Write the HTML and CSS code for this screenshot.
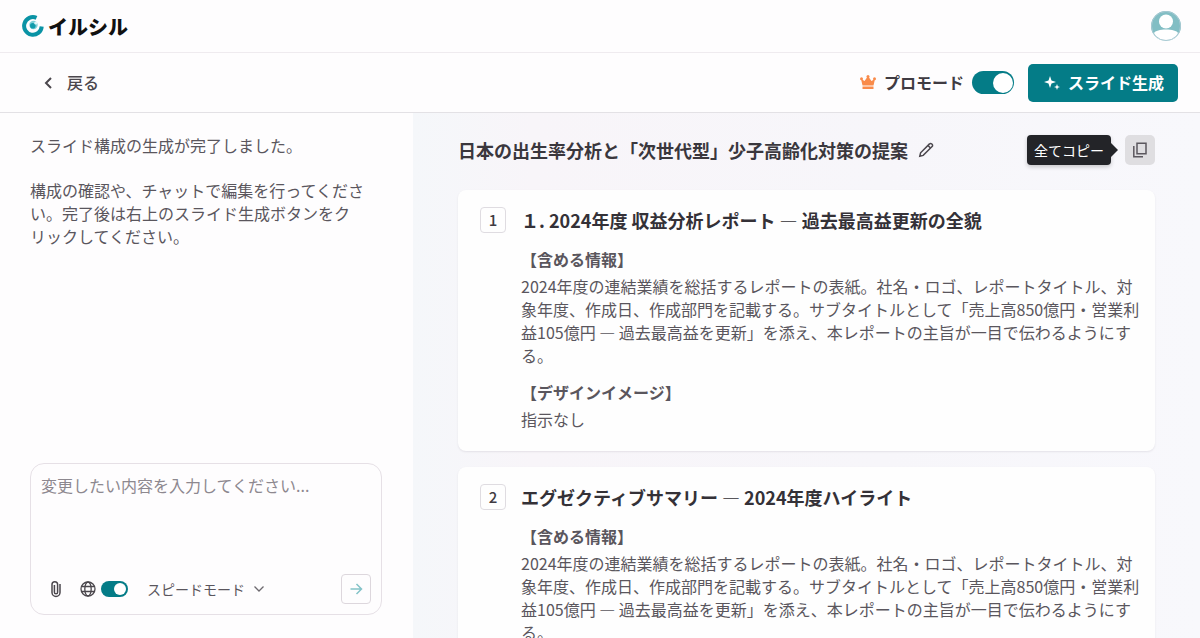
FILE: index.html
```html
<!DOCTYPE html>
<html lang="ja">
<head>
    <meta charset="UTF-8">
    <meta name="viewport" content="width=device-width, initial-scale=1.0">
    <title>イルシル</title>
    <link rel="stylesheet" href="styles.css">
</head>
<body>
    <header class="site-header">
        <a href="#" class="logo">
            <svg width="22" height="22" viewBox="0 0 22 22" fill="none">
                <path d="M14.500 2.900A8.800 8.800 0 1 0 19.700 11.500" stroke="#0a93a5" stroke-width="4"/>
                <circle cx="11.500" cy="10" r="4.200" fill="#7fd0d8"/>
                <circle cx="10.800" cy="10.800" r="2.800" fill="#129bab"/>
                <circle cx="13.800" cy="8" r="1.600" fill="#e4f6f7"/>
            </svg>
            <span>イルシル</span>
        </a>
        <button class="avatar" aria-label="アカウント">
            <svg width="32" height="32" viewBox="0 0 32 32">
                <circle cx="16" cy="16" r="15" fill="#82bec4"/>
                <circle cx="16" cy="11.500" r="7" fill="#fff"/>
                <path d="M3.500 23.500C5.500 20.500 10 19.500 16 19.500s10.500 1 12.500 4A14.400 14.400 0 0 1 3.500 23.500z" fill="#fff"/>
                <circle cx="16" cy="16" r="14.500" fill="none" stroke="#a9c9d3"/>
            </svg>
        </button>
    </header>

    <div class="toolbar">
        <a href="#" class="back">
            <svg width="10" height="12" viewBox="0 0 10 12" fill="none" stroke="#4b474d" stroke-width="2">
                <path d="M8 1L3 6l5 5"/>
            </svg>
            戻る
        </a>
        <div class="toolbar-actions">
            <label class="pro-mode">
                <svg width="16" height="15" viewBox="0 0 16 15" fill="#f98b4a">
                    <path d="M2.500 10.500L1 4l3.600 2L8 1l3.400 5L15 4l-1.500 6.500z"/>
                    <circle cx="1.500" cy="3.800" r="1.500"/>
                    <circle cx="8" cy="1.600" r="1.500"/>
                    <circle cx="14.500" cy="3.800" r="1.500"/>
                    <path d="M2.500 11.500h11v2.500h-11z"/>
                </svg>
                <span>プロモード</span>
                <input type="checkbox" class="switch" checked>
            </label>
            <button class="generate-btn">
                <svg width="16" height="16" viewBox="0 0 16 16" fill="#fff">
                    <path d="M6 1l1.500 4.500L12 7 7.500 8.500 6 13 4.500 8.500 0 7l4.500-1.500z"/>
                    <path d="M13 9l.8 2.200L16 12l-2.200.8L13 15l-.8-2.200L10 12l2.200-.8z"/>
                </svg>
                スライド生成
            </button>
        </div>
    </div>

    <main class="workspace">
        <section class="chat">
            <div class="message">
                <p>スライド構成の生成が完了しました。</p>
                <p>構成の確認や、チャットで編集を行ってください。完了後は右上のスライド生成ボタンをクリックしてください。</p>
            </div>
            <form class="composer">
                <textarea aria-label="変更内容" placeholder="変更したい内容を入力してください..."></textarea>
                <div class="composer-tools">
                    <button type="button" class="icon-btn" aria-label="ファイルを添付">
                        <svg width="12" height="18" viewBox="0 0 12 18" fill="none" stroke="#4b474d" stroke-width="1.500">
                            <path d="M10 4v8.500a4 4 0 0 1-8 0V4.500a2.800 2.800 0 0 1 5.600 0v7.700a1.600 1.600 0 0 1-3.200 0V5"/>
                        </svg>
                    </button>
                    <label class="web-search">
                        <svg width="16" height="16" viewBox="0 0 16 16" fill="none" stroke="#4b474d" stroke-width="1.300">
                            <circle cx="8" cy="8" r="7"/>
                            <ellipse cx="8" cy="8" rx="3.200" ry="7"/>
                            <path d="M1.500 5.500h13M1.500 10.500h13"/>
                        </svg>
                        <input type="checkbox" class="switch small" aria-label="Web検索" checked>
                    </label>
                    <div class="mode">
                        <select aria-label="生成モード">
                            <option>スピードモード</option>
                        </select>
                        <svg width="12" height="8" viewBox="0 0 12 8" fill="none" stroke="#6d696f" stroke-width="1.300">
                            <path d="M1.500 1.500L6 6l4.500-4.500"/>
                        </svg>
                    </div>
                    <button type="submit" class="send-btn" aria-label="送信">
                        <svg width="14" height="14" viewBox="0 0 14 14" fill="none" stroke="#84c3c8" stroke-width="1.500">
                            <path d="M1.500 7h11M7.500 2l5 5-5 5"/>
                        </svg>
                    </button>
                </div>
            </form>
        </section>

        <section class="outline">
            <div class="outline-header">
                <h1>日本の出生率分析と「次世代型」少子高齢化対策の提案</h1>
                <button class="icon-btn edit-btn" aria-label="タイトルを編集">
                    <svg width="16" height="16" viewBox="0 0 16 16" fill="none" stroke="#4b474d" stroke-width="1.500">
                        <path d="M1.800 14.200l.8-3.400L11.500 1.900a1.500 1.500 0 0 1 2.200 0l.4.400a1.500 1.500 0 0 1 0 2.200L5.200 13.400z"/>
                        <path d="M10 3.500L12.500 6"/>
                    </svg>
                </button>
                <div class="copy">
                    <span class="tooltip">全てコピー</span>
                    <button class="copy-btn" aria-label="全てコピー">
                        <svg width="16" height="16" viewBox="0 0 16 16" fill="none" stroke="#5b575e" stroke-width="1.500">
                            <path d="M5 1.200h9v10.500H5z"/>
                            <path d="M1.800 4v10.700H11"/>
                        </svg>
                    </button>
                </div>
            </div>

            <article class="slide-card">
                <span class="number">1</span>
                <div class="slide-body">
                    <h2>１. 2024年度 収益分析レポート ― 過去最高益更新の全貌</h2>
                    <h3>【含める情報】</h3>
                    <p>2024年度の連結業績を総括するレポートの表紙。社名・ロゴ、レポートタイトル、対象年度、作成日、作成部門を記載する。サブタイトルとして「売上高850億円・営業利益105億円 ― 過去最高益を更新」を添え、本レポートの主旨が一目で伝わるようにする。</p>
                    <h3>【デザインイメージ】</h3>
                    <p>指示なし</p>
                </div>
            </article>

            <article class="slide-card">
                <span class="number">2</span>
                <div class="slide-body">
                    <h2>エグゼクティブサマリー ― 2024年度ハイライト</h2>
                    <h3>【含める情報】</h3>
                    <p>2024年度の連結業績を総括するレポートの表紙。社名・ロゴ、レポートタイトル、対象年度、作成日、作成部門を記載する。サブタイトルとして「売上高850億円・営業利益105億円 ― 過去最高益を更新」を添え、本レポートの主旨が一目で伝わるようにする。</p>
                </div>
            </article>
        </section>
    </main>
</body>
</html>
```
FILE: styles.css
```css
* {
    box-sizing: border-box;
}

body {
    display: flex;
    flex-direction: column;
    height: 100vh;
    margin: 0;
    overflow: hidden;
    font-family: "Noto Sans CJK JP", sans-serif;
    font-size: 16px;
    line-height: 23px;
    color: #5a565d;
    background-color: #fefdfe;
}

button, textarea, select {
    font-family: inherit;
    font-size: inherit;
    line-height: inherit;
    color: inherit;
}

button {
    padding: 0;
    border: none;
    background: none;
    cursor: pointer;
}

a {
    color: inherit;
    text-decoration: none;
}

svg {
    display: block;
    flex-shrink: 0;
}

h1, h2, h3, p {
    margin: 0;
}

/* Header */
.site-header {
    display: flex;
    align-items: center;
    justify-content: space-between;
    height: 53px;
    flex-shrink: 0;
    padding: 0 18px 0 22px;
    border-bottom: 1px solid #efebef;
}

.logo {
    display: flex;
    align-items: center;
    gap: 4px;
    font-size: 20px;
    font-weight: 900;
    color: #111;
}

/* Toolbar */
.toolbar {
    display: flex;
    align-items: center;
    justify-content: space-between;
    height: 60px;
    flex-shrink: 0;
    padding: 0 22px 0 43px;
    border-bottom: 1px solid #e3e1e5;
}

.back {
    display: flex;
    align-items: center;
    gap: 14px;
    font-weight: 500;
    color: #4b474d;
}

.toolbar-actions {
    display: flex;
    align-items: center;
    gap: 14px;
}

.pro-mode {
    display: flex;
    align-items: center;
    gap: 8px;
    font-weight: 700;
    color: #3f3b42;
    cursor: pointer;
}

.generate-btn {
    display: flex;
    align-items: center;
    justify-content: center;
    gap: 8px;
    height: 38px;
    padding: 0 14px 0 16px;
    border-radius: 5px;
    font-weight: 700;
    color: #fff;
    background-color: #047c87;
}

.switch {
    appearance: none;
    display: flex;
    align-items: center;
    justify-content: flex-end;
    width: 42px;
    height: 23px;
    margin: 0;
    padding: 1px;
    border-radius: 12px;
    background-color: #047c87;
    cursor: pointer;
}

.switch::before {
    content: "";
    width: 20px;
    height: 20px;
    border-radius: 50%;
    background-color: #fff;
}

.switch:not(:checked) {
    justify-content: flex-start;
    background-color: #bbb;
}

.switch.small {
    width: 27px;
    height: 16px;
    padding: 2px;
}

.switch.small::before {
    width: 12px;
    height: 12px;
}

/* Chat */
.workspace {
    display: grid;
    grid-template-columns: 413px 1fr;
    flex: 1;
    min-height: 0;
}

.chat {
    display: flex;
    flex-direction: column;
    justify-content: space-between;
    min-height: 0;
    padding: 21px 31px 23px 30px;
}

.message {
    padding-right: 8px;
    line-break: strict;
}

.message p + p {
    margin-top: 22px;
}

.composer {
    display: flex;
    flex-direction: column;
    height: 152px;
    padding: 10px 10px 10px 10px;
    border: 1px solid #e6e0e6;
    border-radius: 14px;
}

.composer textarea {
    flex: 1;
    width: 100%;
    padding: 0;
    border: none;
    outline: none;
    resize: none;
    background: none;
}

.composer textarea::placeholder {
    color: #8d888f;
}

.composer-tools {
    display: flex;
    align-items: center;
    padding-left: 9px;
}

.web-search {
    display: flex;
    align-items: center;
    gap: 5px;
    margin-left: 18px;
}

.mode {
    display: flex;
    align-items: center;
    gap: 8px;
    margin-left: 19px;
    font-size: 14px;
}

.mode select {
    appearance: none;
    padding: 0;
    border: none;
    background: none;
}

.send-btn {
    display: flex;
    align-items: center;
    justify-content: center;
    width: 30px;
    height: 30px;
    margin-left: auto;
    border: 1px solid #ddd7dd;
    border-radius: 4px;
}

/* Outline */
.outline {
    min-width: 0;
    overflow: hidden;
    padding: 22px 45px 0;
    background: linear-gradient(90deg, #f5f7fa, #f8f5f9 15%, #f7f6fa 60%, #f8f8fc);
}

.outline-header {
    display: flex;
    align-items: center;
    height: 30px;
    margin-bottom: 25px;
}

.outline-header h1 {
    font-size: 18px;
    font-weight: 700;
    color: #3a373d;
}

.edit-btn {
    margin-left: 10px;
}

.copy {
    position: relative;
    margin-left: auto;
}

.copy-btn {
    display: flex;
    align-items: center;
    justify-content: center;
    width: 30px;
    height: 30px;
    border-radius: 5px;
    background-color: #dfdee1;
}

.tooltip {
    position: absolute;
    top: 0;
    right: 100%;
    margin-right: 14px;
    padding: 0 7px;
    border-radius: 4px;
    font-size: 14px;
    line-height: 30px;
    white-space: nowrap;
    color: #fff;
    background-color: #232428;
    box-shadow: 0 2px 4px rgba(0, 0, 0, 0.2);
}

.tooltip::after {
    content: "";
    position: absolute;
    top: 50%;
    left: 100%;
    margin-top: -7px;
    border: 7px solid transparent;
    border-left-color: #232428;
    border-right: none;
}

.slide-card {
    display: flex;
    gap: 15px;
    margin-bottom: 16px;
    padding: 17px 8px 20px 22px;
    border-radius: 8px;
    background-color: #fefefe;
    box-shadow: 0 1px 2px rgba(60, 50, 70, 0.1);
}

.number {
    flex-shrink: 0;
    width: 26px;
    height: 26px;
    border: 1px solid #dfdce1;
    border-radius: 4px;
    font-size: 15px;
    font-weight: 500;
    line-height: 24px;
    text-align: center;
    color: #3f3b42;
}

.slide-body {
    flex: 1;
    min-width: 0;
}

.slide-body h2 {
    font-size: 18px;
    font-weight: 700;
    line-height: 27px;
    color: #343137;
}

.slide-body h3 {
    margin: 14px 0 4px;
    font-size: 16px;
    font-weight: 700;
    color: #5a565d;
}
```
